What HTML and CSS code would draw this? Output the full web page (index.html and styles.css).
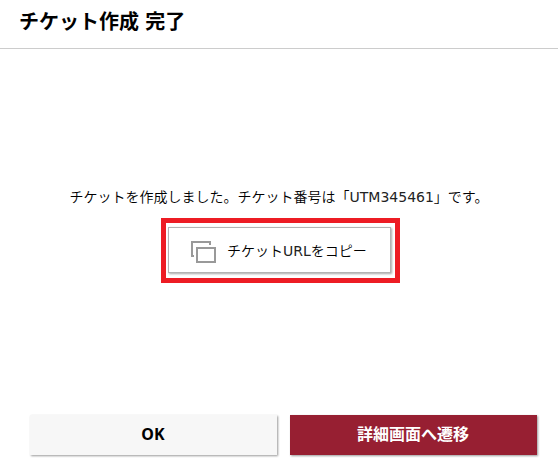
FILE: index.html
```html
<!DOCTYPE html>
<html lang="ja">
<head>
  <meta charset="UTF-8">
  <meta name="viewport" content="width=device-width, initial-scale=1.0">
  <title>チケット作成 完了</title>
  <link rel="stylesheet" href="styles.css">
</head>
<body>

  <div class="dialog">
    <h2 class="dialog-title">チケット作成 完了</h2>

    <div class="dialog-body">
      <p class="message">チケットを作成しました。チケット番号は「<span class="latin">UTM345461</span>」です。</p>
      <div class="highlight">
        <button class="copy-btn" type="button">
          <svg class="copy-icon" width="25" height="22" viewBox="0 0 25 22" fill="none" stroke="#999" stroke-width="2">
            <path d="M3 15H1V1H19V4" />
            <rect x="6" y="7" width="18" height="14" />
          </svg>
          <span>チケット<span class="latin">URL</span>をコピー</span>
        </button>
      </div>
    </div>

    <div class="actions">
      <button class="btn" type="button">OK</button>
      <button class="btn btn-primary" type="button">詳細画面へ遷移</button>
    </div>
  </div>

</body>
</html>
```
FILE: styles.css
```css
* { box-sizing: border-box; }

body {
  margin: 0;
  background: #fff;
  color: #000;
  font-family: "DejaVu Sans", "Noto Sans CJK JP", sans-serif;
}

.dialog {
  display: flex;
  flex-direction: column;
  height: 476px;
}

.dialog-title {
  margin: 0;
  height: 49px;
  padding: 0 19px;
  border-bottom: 1px solid #ccc;
  font-family: "Noto Sans", "Noto Sans CJK JP", sans-serif;
  font-size: 20px;
  font-weight: bold;
  line-height: 44px;
  word-spacing: 1px;
}

.dialog-body {
  flex: 1;
  display: flex;
  flex-direction: column;
  align-items: center;
  padding-top: 138px;
}

.message {
  margin: 0 0 11px;
  font-size: 14px;
  font-weight: 350;
  line-height: 20px;
  white-space: nowrap;
}

.latin {
  font-weight: 400;
  color: #222;
}

.highlight {
  width: 239px;
  height: 65px;
  padding: 4px 4px 5px 2px;
  margin-left: 3px;
  border: 5px solid #ed1c24;
}

.copy-btn {
  display: flex;
  align-items: center;
  gap: 11px;
  width: 223px;
  height: 46px;
  padding: 0 0 0 22px;
  background: #fff;
  border: 1px solid #b3b3b3;
  box-shadow: 1px 1px 2px rgba(0, 0, 0, 0.35);
  color: #000;
  font-family: inherit;
  font-size: 14px;
  font-weight: 350;
  white-space: nowrap;
  cursor: pointer;
}

.copy-icon {
  flex: none;
  margin-top: 3px;
}

.actions {
  display: flex;
  gap: 13px;
  padding: 0 21px 21px 30px;
}

.btn {
  flex: 1;
  height: 40px;
  padding: 0 1px 2px 0;
  border: none;
  background: #f7f7f7;
  box-shadow: 1px 1px 2px rgba(0, 0, 0, 0.4);
  color: #000;
  font-family: "Noto Sans", "Noto Sans CJK JP", sans-serif;
  font-size: 16px;
  font-weight: bold;
  cursor: pointer;
}

.btn-primary {
  padding-bottom: 4px;
  background: #971f32;
  color: #fff;
}
```
